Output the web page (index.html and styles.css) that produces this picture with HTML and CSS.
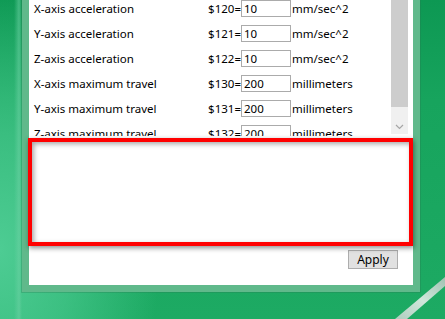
FILE: index.html
```html
<!DOCTYPE html>
<html>
<head>
<meta charset="utf-8">
<link rel="stylesheet" href="styles.css">
</head>
<body>
<div class="desk">
  <div class="frame">
    <div class="panel">
      <div class="list">
        <div class="rows">
          <div class="row"><span class="label">X-axis acceleration</span><span class="code">$120=</span><input class="field" value="10"><span class="unit">mm/sec^2</span></div>
          <div class="row"><span class="label">Y-axis acceleration</span><span class="code">$121=</span><input class="field" value="10"><span class="unit">mm/sec^2</span></div>
          <div class="row"><span class="label">Z-axis acceleration</span><span class="code">$122=</span><input class="field" value="10"><span class="unit">mm/sec^2</span></div>
          <div class="row"><span class="label">X-axis maximum travel</span><span class="code">$130=</span><input class="field" value="200"><span class="unit">millimeters</span></div>
          <div class="row"><span class="label">Y-axis maximum travel</span><span class="code">$131=</span><input class="field" value="200"><span class="unit">millimeters</span></div>
          <div class="row"><span class="label">Z-axis maximum travel</span><span class="code">$132=</span><input class="field" value="200"><span class="unit">millimeters</span></div>
        </div>
        <div class="scrollbar">
          <div class="thumb"></div>
          <div class="track">
            <svg class="chev" width="9" height="6" viewBox="0 0 9 6"><path d="M1 1 L4.5 4.5 L8 1" fill="none" stroke="#a6a6a6" stroke-width="1.2"/></svg>
          </div>
        </div>
      </div>
      <div class="footer">
        <button class="apply">Apply</button>
      </div>
    </div>
  </div>
  <div class="highlight"></div>
  <svg class="streak" width="50" height="45" viewBox="0 0 50 45">
    <defs>
      <linearGradient id="sg" x1="0" y1="1" x2="1" y2="0">
        <stop offset="0" stop-color="#c9d3cf"/>
        <stop offset="0.5" stop-color="#eef2f0"/>
        <stop offset="1" stop-color="#b8c6c0"/>
      </linearGradient>
    </defs>
    <polygon points="0,45 12,45 50,12 50,3" fill="url(#sg)" opacity="0.85"/>
  </svg>
</div>
</body>
</html>
```
FILE: styles.css
```css
html, body {
  margin: 0;
  padding: 0;
}
body {
  width: 445px;
  height: 319px;
  overflow: hidden;
  font-family: "Noto Sans", "Open Sans", sans-serif;
  font-size: 11.5px;
  color: #000;
}
.desk {
  position: relative;
  width: 445px;
  height: 319px;
  background:
    linear-gradient(90deg, rgba(80, 205, 150, 0) 0px, rgba(80, 205, 150, 0) 14px, rgba(110, 210, 165, 0.55) 19px, rgba(110, 210, 165, 0) 22px),
    radial-gradient(ellipse 160px 260px at 0px 250px, rgba(80, 206, 150, 0.95), rgba(80, 206, 150, 0.6) 45%, rgba(80, 206, 150, 0) 100%),
    linear-gradient(180deg, #0d9853 0px, #17a45d 100px, #1daa63 319px);
}
.frame {
  margin-left: 22px;
  width: 398px;
  height: 292px;
  box-sizing: border-box;
  border: 7px solid #60b98b;
  border-top: none;
  box-shadow: 0 0 0 1px rgba(40, 120, 80, 0.3);
}
.panel {
  background: #fff;
  height: 285px;
  display: flex;
  flex-direction: column;
}
.list {
  height: 136px;
  display: flex;
  overflow: hidden;
}
.rows {
  flex: 1;
  padding-left: 5px;
}
.row {
  display: flex;
  align-items: center;
  height: 17px;
  margin-bottom: 8px;
  white-space: nowrap;
}
.label {
  width: 172px;
}
.code {
  width: 35px;
  text-align: right;
}
.field {
  width: 50px;
  height: 17px;
  box-sizing: border-box;
  border: 1px solid #ababab;
  padding: 0 2px;
  margin: 0;
  font: inherit;
  color: #000;
  outline: none;
}
.unit {
  margin-left: 1px;
}
.scrollbar {
  width: 17px;
  height: 134px;
  margin-right: 5px;
  display: flex;
  flex-direction: column;
}
.thumb {
  height: 107px;
  background: #cdcdcd;
}
.track {
  flex: 1;
  background: #f0f0f0;
  display: flex;
  align-items: flex-end;
  justify-content: center;
  padding-bottom: 4px;
}
.footer {
  display: flex;
  justify-content: flex-end;
  padding-top: 114px;
  padding-right: 15px;
}
.apply {
  width: 50px;
  height: 19px;
  box-sizing: border-box;
  margin: 0;
  padding: 0;
  border: 1px solid #adadad;
  background: #e1e1e1;
  font: inherit;
  font-size: 12px;
  color: #000;
  line-height: 16px;
}
.highlight {
  position: absolute;
  left: 28px;
  top: 138px;
  width: 385px;
  height: 108px;
  box-sizing: border-box;
  border: 4px solid #ff0000;
  box-shadow: 1px 2px 5px rgba(0, 0, 0, 0.45), inset 2px 2px 5px rgba(0, 0, 0, 0.35);
}
.streak {
  position: absolute;
  right: 0;
  bottom: 0;
}
```
